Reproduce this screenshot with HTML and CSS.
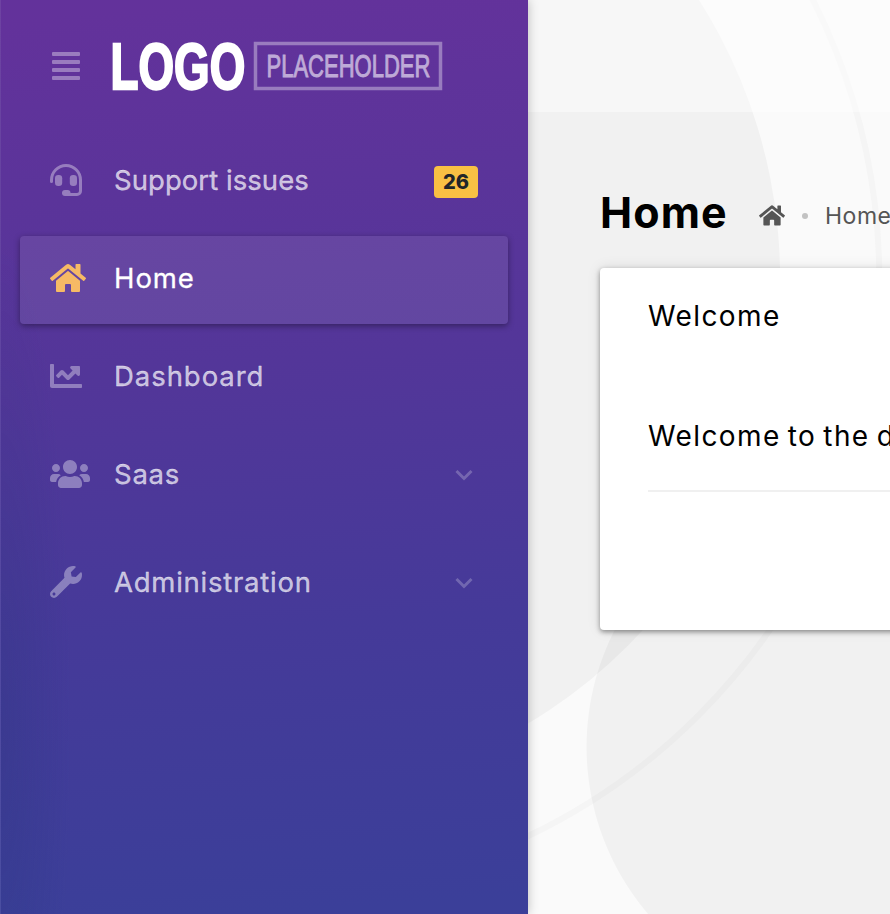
FILE: index.html
```html
<!DOCTYPE html>
<html lang="en">
<head>
<meta charset="utf-8">
<title>Home</title>
<link rel="stylesheet" href="styles.css">
</head>
<body>
<svg width="0" height="0" class="defs" aria-hidden="true">
  <symbol id="home" viewBox="0 0 576 512"><path d="M280.37 148.26L96 300.11V464a16 16 0 0 0 16 16l112.06-.29a16 16 0 0 0 15.92-16V368a16 16 0 0 1 16-16h64a16 16 0 0 1 16 16v95.64a16 16 0 0 0 16 16.05L464 480a16 16 0 0 0 16-16V300L295.67 148.26a12.19 12.19 0 0 0-15.3 0zM571.6 251.47L488 182.56V44.05a12 12 0 0 0-12-12h-56a12 12 0 0 0-12 12v72.61L318.47 43a48 48 0 0 0-61 0L4.34 251.47a12 12 0 0 0-1.6 16.9l25.5 31A12 12 0 0 0 45.15 301l235.22-193.74a12.19 12.19 0 0 1 15.3 0L530.9 301a12 12 0 0 0 16.9-1.6l25.5-31a12 12 0 0 0-1.7-16.93z"/></symbol>
</svg>
<div class="app">
  <aside class="sidebar">
    <header class="brand">
      <div class="burger"><i></i><i></i><i></i><i></i></div>
      <svg class="logo" width="332" height="48" viewBox="0 0 332 48">
        <text class="logo-main" transform="translate(-1.500 46.500) scale(.715 1)">LOGO</text>
        <rect class="logo-box" x="143.500" y="1.500" width="185" height="45"/>
        <text class="logo-sub" transform="translate(154.500 35) scale(.71 1)">PLACEHOLDER</text>
      </svg>
    </header>
    <nav class="nav">
      <a class="item">
        <span class="icon"><svg width="32" height="32" viewBox="0 0 32 32"><g class="headset"><path class="line" d="M1.500 17.500V16a14.500 14.500 0 0 1 29 0v11a3.500 3.500 0 0 1-3.500 3.500H17"/><rect x="5" y="11" width="7.200" height="11" rx="3.300"/><rect x="19.800" y="11" width="7.200" height="11" rx="3.300"/><rect x="12" y="26" width="8.500" height="6" rx="3"/></g></svg></span>
        <span class="label support">Support issues</span><span class="badge">26</span>
      </a>
      <a class="item active">
        <span class="icon"><svg width="36" height="32"><use href="#home"/></svg></span>
        <span class="label home">Home</span>
      </a>
      <a class="item">
        <span class="icon"><svg width="32" height="32" viewBox="0 0 512 512"><path d="M496 384H64V80c0-8.840-7.160-16-16-16H16C7.160 64 0 71.160 0 80v336c0 17.670 14.330 32 32 32h464c8.840 0 16-7.160 16-16v-32c0-8.840-7.160-16-16-16zM464 96H345.940c-21.380 0-32.090 25.850-16.970 40.970l32.400 32.400L288 242.750l-73.370-73.370c-12.500-12.500-32.760-12.500-45.250 0l-68.690 68.690c-6.250 6.250-6.250 16.380 0 22.630l22.620 22.620c6.250 6.250 16.380 6.250 22.630 0L192 237.250l73.370 73.370c12.500 12.500 32.760 12.500 45.250 0l96-96 32.400 32.400c15.120 15.120 40.970 4.410 40.970-16.970V112c.01-8.840-7.150-16-15.990-16z"/></svg></span>
        <span class="label dash">Dashboard</span>
      </a>
      <a class="item">
        <span class="icon"><svg width="40" height="32" viewBox="0 0 640 512"><path d="M96 224c35.300 0 64-28.700 64-64s-28.700-64-64-64-64 28.700-64 64 28.700 64 64 64zm448 0c35.300 0 64-28.700 64-64s-28.700-64-64-64-64 28.700-64 64 28.700 64 64 64zm32 32h-64c-17.600 0-33.500 7.100-45.100 18.600 40.300 22.100 68.900 62 75.100 109.400h66c17.700 0 32-14.300 32-32v-32c0-35.300-28.700-64-64-64zm-256 0c61.900 0 112-50.100 112-112S381.900 32 320 32 208 82.100 208 144s50.100 112 112 112zm76.800 32h-8.300c-20.800 10-43.900 16-68.500 16s-47.600-6-68.500-16h-8.300C179.600 288 128 339.600 128 403.200V432c0 26.500 21.500 48 48 48h288c26.500 0 48-21.500 48-48v-28.800c0-63.600-51.600-115.200-115.200-115.200zm-223.700-13.400C161.500 263.100 145.600 256 128 256H64c-35.300 0-64 28.700-64 64v32c0 17.700 14.300 32 32 32h65.900c6.300-47.400 34.900-87.300 75.200-109.400z"/></svg></span>
        <span class="label saas">Saas</span>
        <svg class="chevron" width="18" height="12" viewBox="0 0 18 12"><path d="M1.500 2L9 9.500 16.500 2"/></svg>
      </a>
      <a class="item admin-row">
        <span class="icon"><svg width="32" height="32" viewBox="0 0 512 512"><path d="M507.730 109.100c-2.240-9.030-13.540-12.090-20.120-5.510l-74.360 74.360-67.880-11.310-11.310-67.880 74.360-74.360c6.620-6.620 3.430-17.900-5.660-20.160-47.380-11.740-99.550.91-136.580 37.930-39.640 39.640-50.550 97.100-34.050 147.200L18.740 402.760c-24.990 24.990-24.990 65.510 0 90.500 24.990 24.990 65.510 24.990 90.500 0l213.210-213.210c50.120 16.710 107.470 5.680 147.370-34.220 37.070-37.070 49.700-89.320 37.910-136.730zM64 472c-13.250 0-24-10.750-24-24 0-13.260 10.750-24 24-24s24 10.740 24 24c0 13.250-10.750 24-24 24z"/></svg></span>
        <span class="label admin">Administration</span>
        <svg class="chevron" width="18" height="12" viewBox="0 0 18 12"><path d="M1.500 2L9 9.500 16.500 2"/></svg>
      </a>
    </nav>
  </aside>
  <main class="main">
    <svg class="backdrop" width="362" height="914" viewBox="528 0 362 914">
      <rect x="528" width="362" height="914" fill="#fafafa"/>
      <circle cx="261.300" cy="278.600" r="618" fill="none" stroke="#f5f5f5" stroke-width="6"/>
      <circle cx="261.300" cy="278.600" r="518.800" fill="#f1f1f1"/>
      <path d="M844 489.500a257.500 257.500 0 1 0 .01 0z" fill="#000" fill-opacity=".034"/>
    </svg>
    <div class="topbar"></div>
    <div class="content">
      <div class="heading">
        <h1>Home</h1>
        <svg class="crumb-icon" width="26" height="23"><use href="#home"/></svg>
        <i class="dot"></i>
        <span class="crumb">Home</span>
      </div>
      <section class="card">
        <h2>Welcome</h2>
        <p>Welcome to the d</p>
        <hr>
      </section>
    </div>
  </main>
</div>
</body>
</html>
```
FILE: styles.css
```css
* { box-sizing: border-box; }
body { margin: 0; font-family: Inter, "Liberation Sans", sans-serif; overflow: hidden; }
.defs { position: absolute; }
.app { display: flex; width: 890px; height: 914px; overflow: hidden; }
.sidebar {
  flex: 0 0 528px;
  height: 914px;
  z-index: 1;
  border-left: 1px solid rgba(255, 255, 255, .08);
  background:
    radial-gradient(70px 480px at 0 720px, rgba(30, 50, 110, .2), rgba(30, 50, 110, 0)),
    linear-gradient(176deg, #3b3f99 2%, #453a99 32%, #533699 60%, #63329b 98%);
  background:
    radial-gradient(70px 480px at 0 720px, rgba(30, 50, 110, .2), rgba(30, 50, 110, 0)),
    linear-gradient(176deg, #63329b 2%, #533699 40%, #453a99 68%, #3b3f99 98%);
  box-shadow: 0 0 10px rgba(0, 0, 0, .25);
}
.brand { display: flex; align-items: center; height: 138px; padding: 0 0 6px 51px; }
.burger { display: grid; gap: 4px; width: 28px; margin-right: 32px; }
.burger i { height: 4px; border-radius: 1px; background: rgba(255, 255, 255, .36); }
.logo { overflow: visible; }
.logo-main { font: bold 64px "Liberation Sans", sans-serif; fill: #fff; stroke: #fff; stroke-width: 2.400px; }
.logo-sub { font: 31px "Liberation Sans", sans-serif; fill: rgb(190, 170, 215); stroke: rgb(190, 170, 215); stroke-width: 1px; }
.logo-box { fill: none; stroke: rgba(255, 255, 255, .36); stroke-width: 3.500px; }
.nav { display: flex; flex-direction: column; gap: 10px; padding: 0 20px 0 19px; }
.item {
  display: flex;
  align-items: center;
  height: 88px;
  padding: 0 30px 4px;
  border-radius: 4px;
  font-size: 27.500px;
  line-height: 40px;
  color: rgba(255, 255, 255, .7);
}
.icon { display: flex; width: 64px; }
.icon svg { fill: rgba(255, 255, 255, .36); }
.icon .headset { fill: #fff; opacity: .36; }
.icon .line { fill: none; stroke: #fff; stroke-width: 3px; stroke-linecap: round; }
.active { color: #fff; background: rgba(255, 255, 255, .085); box-shadow: 0 2px 6px rgba(0, 0, 0, .38); }
.active .icon svg { fill: #f6ba65; }
.label { flex: 1; white-space: nowrap; -webkit-text-stroke: .3px currentColor; }
.support { letter-spacing: .05px; }
.home, .dash { letter-spacing: .950px; }
.saas, .admin { letter-spacing: .750px; }
.badge {
  width: 44px;
  height: 32px;
  margin-top: 4px;
  border-radius: 4px;
  background: #f9c043;
  color: #212529;
  font-size: 20px;
  font-weight: 800;
  line-height: 33px;
  text-align: center;
}
.chevron { margin: 1px 5px 0 0; fill: none; stroke: rgba(255, 255, 255, .23); stroke-width: 3px; }
.admin-row { margin-top: 10px; }
.main { position: relative; flex: 1; min-width: 0; overflow: hidden; }
.backdrop { position: absolute; inset: 0; }
.topbar { position: relative; height: 112px; background: rgba(255, 255, 255, .42); }
.content { position: relative; padding: 76px 0 0 72px; }
.heading { display: flex; align-items: center; height: 50px; margin-bottom: 30px; white-space: nowrap; }
h1 { flex: none; width: 159px; margin: 0 0 2px; font-size: 43px; font-weight: 700; line-height: 50px; letter-spacing: 1.100px; }
.crumb-icon { flex: none; margin-top: 4px; fill: #555; }
.dot { flex: none; width: 6px; height: 6px; margin: 5px 17px 0; border-radius: 50%; background: #c2c2c2; }
.crumb { margin-top: 5px; font-size: 23px; letter-spacing: .500px; color: #555; }
.card { width: 700px; height: 362px; padding: 28px 48px; border-radius: 4px; background: #fff; box-shadow: 0 2px 5px rgba(0, 0, 0, .4), 0 0 14px rgba(0, 0, 0, .1); }
.card h2, .card p { margin: 0; font-size: 28px; font-weight: 400; line-height: 40px; letter-spacing: 1.400px; word-spacing: -2.200px; color: #000; }
.card p { margin-top: 80px; }
hr { height: 2px; margin: 34px 0 0; border: 0; background: #f0f0f0; }
```
